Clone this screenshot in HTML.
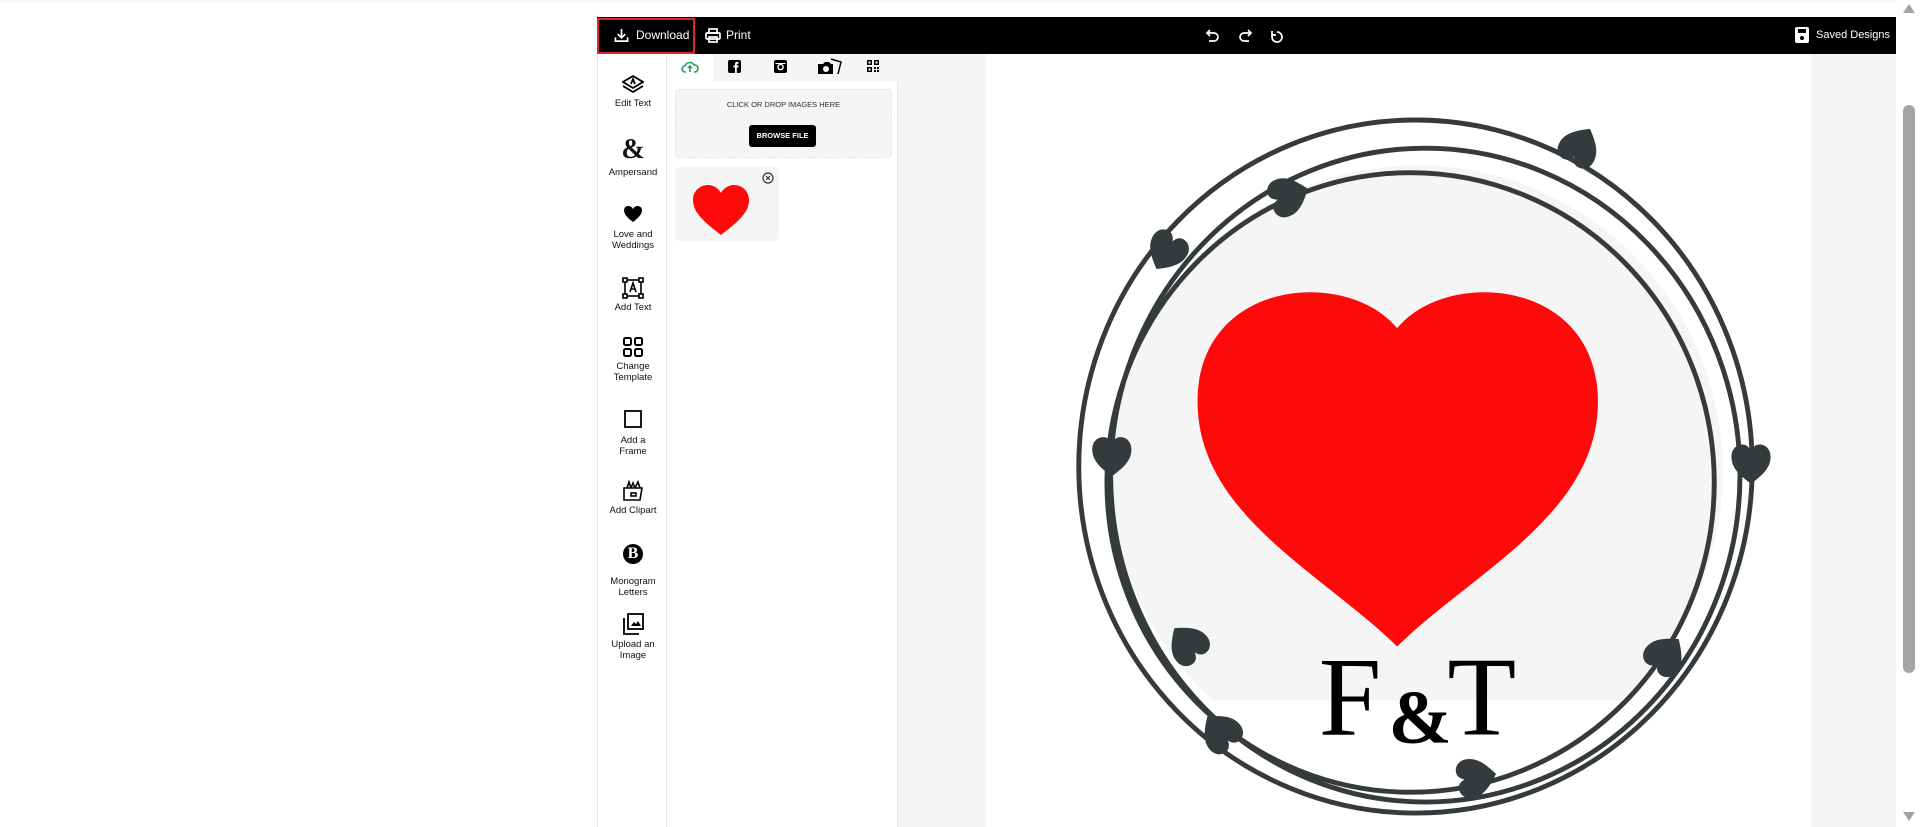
<!DOCTYPE html>
<html><head><meta charset="utf-8"><style>
*{margin:0;padding:0;box-sizing:border-box}
body{width:1920px;height:827px;overflow:hidden;background:#fff;font-family:"Liberation Sans",sans-serif;position:relative}
.abs{position:absolute}
.top{left:597px;top:17px;width:1299px;height:37px;background:#000;color:#fff;font-size:12px}
.side{left:597px;top:54px;width:70px;height:773px;background:#fff;border-left:1px solid #e2e2e2;border-right:1px solid #e6e6e6}
.item{position:absolute;left:0;width:70px;text-align:center;font-size:9.5px;line-height:11px;color:#111}
.item svg{display:block;margin:0 auto 3px}
.panel{left:667px;top:54px;width:231px;height:773px;background:#fff;border-right:1px solid #e8e8e8}
.canvasbg{left:898px;top:54px;width:998px;height:773px;background:#f5f5f5}
.sb{left:1898px;top:0;width:22px;height:827px;background:#fff}
</style></head><body>
<div class="abs" style="left:0;top:0;width:1898px;height:2px;background:#f4f6f8"></div>
<div class="abs canvasbg"></div>
<div class="abs" style="left:986px;top:54px;width:825px;height:773px;background:#fff"></div>

<div class="abs top">
  <div class="abs" style="left:0;top:1px;width:98px;height:36px;border:2px solid #e0262b"></div>
  <svg class="abs" style="left:17px;top:11px" width="15" height="15" viewBox="0 0 16 16" fill="none" stroke="#fff" stroke-width="1.8"><path d="M8 1v9M4 6.5l4 4 4-4M1.5 10v4h13v-4"/></svg>
  <span class="abs" style="left:39px;top:11px">Download</span>
  <svg class="abs" style="left:108px;top:11px" width="16" height="15" viewBox="0 0 16 15" fill="none" stroke="#fff" stroke-width="1.7"><rect x="4" y="1" width="8" height="4"/><rect x="1" y="5" width="14" height="6" rx="1"/><rect x="4" y="9" width="8" height="5"/></svg>
  <span class="abs" style="left:129px;top:11px">Print</span>
  <svg class="abs" style="left:608px;top:11px" width="80" height="16" viewBox="0 0 80 16" fill="none" stroke="#fff" stroke-width="1.7"><path d="M3 5h6a4 4 0 0 1 0 8H4M5 2L2 5l3 3"/><path d="M45 5h-6a4 4 0 0 0 0 8h5M43 2l3 3-3 3"/><path d="M72 4a5 5 0 1 1-4 2M67 3v4h4"/></svg>
  <svg class="abs" style="left:1198px;top:10px" width="14" height="16" viewBox="0 0 14 16"><rect x="0" y="0" width="14" height="16" rx="2" fill="#fff"/><rect x="3" y="2" width="8" height="4" fill="#000"/><circle cx="7" cy="11" r="2" fill="#000"/></svg>
  <span class="abs" style="left:1219px;top:12px;font-size:11px">Saved Designs</span>
</div>

<div class="abs side">
  <div class="item" style="top:21px"><svg width="22" height="20" viewBox="0 0 22 20" fill="none" stroke="#000" stroke-width="1.8"><path d="M11 1L1 7l10 6 10-6z"/><path d="M1 11l10 6 10-6"/><path d="M9 9l2-5 2 5"/></svg><div style="margin-top:2px">Edit Text</div></div>
  <div class="item" style="top:80px"><div style="font:bold 28px 'Liberation Serif',serif;height:33px">&amp;</div>Ampersand</div>
  <div class="item" style="top:151px"><svg width="20" height="18" viewBox="0 0 20 18"><path d="M10 17C3 12 1 8 1 5.5 1 2.5 3 1 5.5 1 8 1 9.5 3 10 4 10.5 3 12 1 14.5 1 17 1 19 2.5 19 5.5 19 8 17 12 10 17z"/></svg><div style="margin-top:6px">Love and<br>Weddings</div></div>
  <div class="item" style="top:223px"><svg width="22" height="22" viewBox="0 0 22 22" fill="none" stroke="#000" stroke-width="1.6"><rect x="3" y="3" width="16" height="16"/><rect x="1" y="1" width="4" height="4" fill="#fff"/><rect x="17" y="1" width="4" height="4" fill="#fff"/><rect x="1" y="17" width="4" height="4" fill="#fff"/><rect x="17" y="17" width="4" height="4" fill="#fff"/><path d="M8 15l3-9 3 9M9 12h4"/></svg>Add Text</div>
  <div class="item" style="top:282px"><svg width="22" height="22" viewBox="0 0 22 22" fill="none" stroke="#000" stroke-width="2"><rect x="2" y="2" width="7" height="7" rx="1.5"/><rect x="13" y="2" width="7" height="7" rx="1.5"/><rect x="2" y="13" width="7" height="7" rx="1.5"/><rect x="13" y="13" width="7" height="7" rx="1.5"/></svg>Change<br>Template</div>
  <div class="item" style="top:355px"><svg width="20" height="20" viewBox="0 0 20 20" fill="none" stroke="#000" stroke-width="1.8"><rect x="2" y="2" width="16" height="16"/></svg><div style="margin-top:6px">Add a<br>Frame</div></div>
  <div class="item" style="top:426px"><svg width="22" height="22" viewBox="0 0 22 22" fill="none" stroke="#000" stroke-width="1.6"><path d="M2 8h18l-2 12H2z"/><path d="M5 8l2-6 2 6M9 8l2-5 2 5M13 8l3-6 2 6"/><rect x="9" y="13" width="5" height="3"/></svg>Add Clipart</div>
  <div class="item" style="top:490px"><div style="width:20px;height:20px;border-radius:50%;background:#000;color:#fff;font:bold 16px/20px 'Liberation Serif',serif;margin:0 auto 12px">B</div>Monogram<br>Letters</div>
  <div class="item" style="top:559px"><svg width="22" height="22" viewBox="0 0 22 22" fill="none" stroke="#000" stroke-width="1.8"><rect x="6" y="1" width="15" height="15"/><path d="M2 5v16h15"/><path d="M9 13l3-4 2 2 2-3 3 5z" fill="#000" stroke="none"/></svg><div style="margin-top:4px">Upload an<br>Image</div></div>
</div>

<div class="abs panel">
  <div class="abs" style="left:0;top:0;width:231px;height:27px;background:#f5f5f5"></div>
  <div class="abs" style="left:0;top:0;width:46px;height:27px;background:#fff"></div>
  <svg class="abs" style="left:14px;top:6px" width="18" height="13" viewBox="0 0 18 13" fill="none" stroke="#27a35e" stroke-width="1.6"><path d="M5 12H4a3 3 0 0 1 0-6 5 5 0 0 1 9-1 3.5 3.5 0 0 1 1 7h-1"/><path d="M9 12V6M7 8l2-2 2 2"/></svg>
  <svg class="abs" style="left:61px;top:6px" width="13" height="13" viewBox="0 0 13 13"><rect width="13" height="13" rx="2"/><path d="M7 13V7.5H5.5v-2H7V4c0-1.5 1-2.2 2.2-2.2H10.5v1.9H9.5c-.6 0-.7.3-.7.7v1.1h1.8l-.3 2H8.8V13z" fill="#fff"/></svg>
  <svg class="abs" style="left:107px;top:6px" width="13" height="13" viewBox="0 0 13 13"><rect width="13" height="13" rx="2"/><circle cx="6.5" cy="7" r="2.6" fill="none" stroke="#fff" stroke-width="1.4"/><rect x="1.5" y="3" width="10" height="1" fill="#fff"/></svg>
  <svg class="abs" style="left:150px;top:4px" width="25" height="17" viewBox="0 0 25 17"><path d="M1 6h5l2-2h4l2 2h2v10H1z"/><circle cx="9" cy="11" r="3" fill="#fff"/><path d="M14 1l10 3-3 12" fill="none" stroke="#000" stroke-width="1.5"/></svg>
  <svg class="abs" style="left:200px;top:6px" width="12" height="12" viewBox="0 0 12 12"><rect width="5" height="5"/><rect x="7" width="5" height="5"/><rect y="7" width="5" height="5"/><rect x="1.5" y="1.5" width="2" height="2" fill="#fff"/><rect x="8.5" y="1.5" width="2" height="2" fill="#fff"/><rect x="1.5" y="8.5" width="2" height="2" fill="#fff"/><rect x="7" y="7" width="2" height="2"/><rect x="10" y="10" width="2" height="2"/><rect x="10" y="7" width="2" height="2"/><rect x="7" y="10" width="2" height="2"/></svg>
  <div class="abs" style="left:8px;top:35px;width:217px;height:69px;background:#f5f5f5;border:1px dashed #e2e2e2;border-radius:4px"></div>
  <div class="abs" style="left:8px;top:46px;width:217px;text-align:center;font-size:7.5px;color:#333">CLICK OR DROP IMAGES HERE</div>
  <div class="abs" style="left:82px;top:71px;width:67px;height:22px;background:#000;color:#fff;border-radius:3px;font-size:7.5px;line-height:22px;text-align:center;font-weight:bold">BROWSE FILE</div>
  <div class="abs" style="left:8px;top:113px;width:104px;height:74px;background:#f5f5f5;border-radius:4px"></div>
  <svg class="abs" style="left:26px;top:131px" width="56" height="50" viewBox="0 0 56 50"><path d="M28 50C10 36 0 27 0 15 0 6 7 0 15 0 21 0 26 4 28 8 30 4 35 0 41 0 49 0 56 6 56 15 56 27 46 36 28 50z" fill="#ff0a0a"/></svg>
  <svg class="abs" style="left:95px;top:118px" width="12" height="12" viewBox="0 0 12 12" fill="none" stroke="#333" stroke-width="1.2"><circle cx="6" cy="6" r="5"/><path d="M4 4l4 4M8 4l-4 4"/></svg>
</div>

<svg class="abs" style="left:0;top:0" width="1920" height="827" viewBox="0 0 1568 675.4">
  <defs><clipPath id="c"><rect x="0" y="0" width="1568" height="572"/></clipPath>
  <path id="h" d="M0 17C-11 9-16 3-16-5-16-11-12-15-7-15-3-15-1-12 0-9 1-12 3-15 7-15 12-15 16-11 16-5 16 3 11 9 0 17z" fill="#353a3d"/></defs>
  <circle cx="1157" cy="385" r="250" fill="#f5f5f5" clip-path="url(#c)"/>
  <g fill="none" stroke="#353a3d" stroke-width="4">
    <ellipse cx="1156" cy="381" rx="275" ry="283"/>
    <ellipse cx="1164" cy="388" rx="257" ry="267"/>
    <ellipse cx="1152" cy="394" rx="248" ry="253"/>
  </g>
  <use href="#h" transform="translate(1290,120) rotate(-150)"/>
  <use href="#h" transform="translate(1052,160) rotate(-110)"/>
  <use href="#h" transform="translate(953,205) rotate(30)"/>
  <use href="#h" transform="translate(908,372)"/>
  <use href="#h" transform="translate(1430,378)"/>
  <use href="#h" transform="translate(970,526) rotate(140)"/>
  <use href="#h" transform="translate(1360,535) rotate(-140)"/>
  <use href="#h" transform="translate(997,598) rotate(140)"/>
  <use href="#h" transform="translate(1205,635) rotate(-100)"/>
  <path d="M1141 268C1100 218 978 228 978 328C978 420 1080 468 1141 528C1202 468 1305 420 1305 328C1305 228 1182 218 1141 268Z" fill="#ff0a0a"/>
  <text x="1077" y="600" font-family="Liberation Serif,serif" font-size="92" fill="#000">F</text>
  <text x="1134" y="607" font-family="Liberation Serif,serif" font-weight="bold" font-size="62" fill="#000">&amp;</text>
  <text x="1182" y="600" font-family="Liberation Serif,serif" font-size="92" fill="#000">T</text>
</svg>

<div class="abs sb">
  <svg class="abs" style="left:5px;top:4px" width="12" height="9" viewBox="0 0 12 9"><path d="M6 0l6 9H0z" fill="#a3a3a3"/></svg>
  <div class="abs" style="left:5px;top:105px;width:12px;height:568px;background:#a3a3a3;border-radius:6px"></div>
  <svg class="abs" style="left:5px;top:812px" width="12" height="9" viewBox="0 0 12 9"><path d="M0 0h12L6 9z" fill="#a3a3a3"/></svg>
</div>
</body></html>
